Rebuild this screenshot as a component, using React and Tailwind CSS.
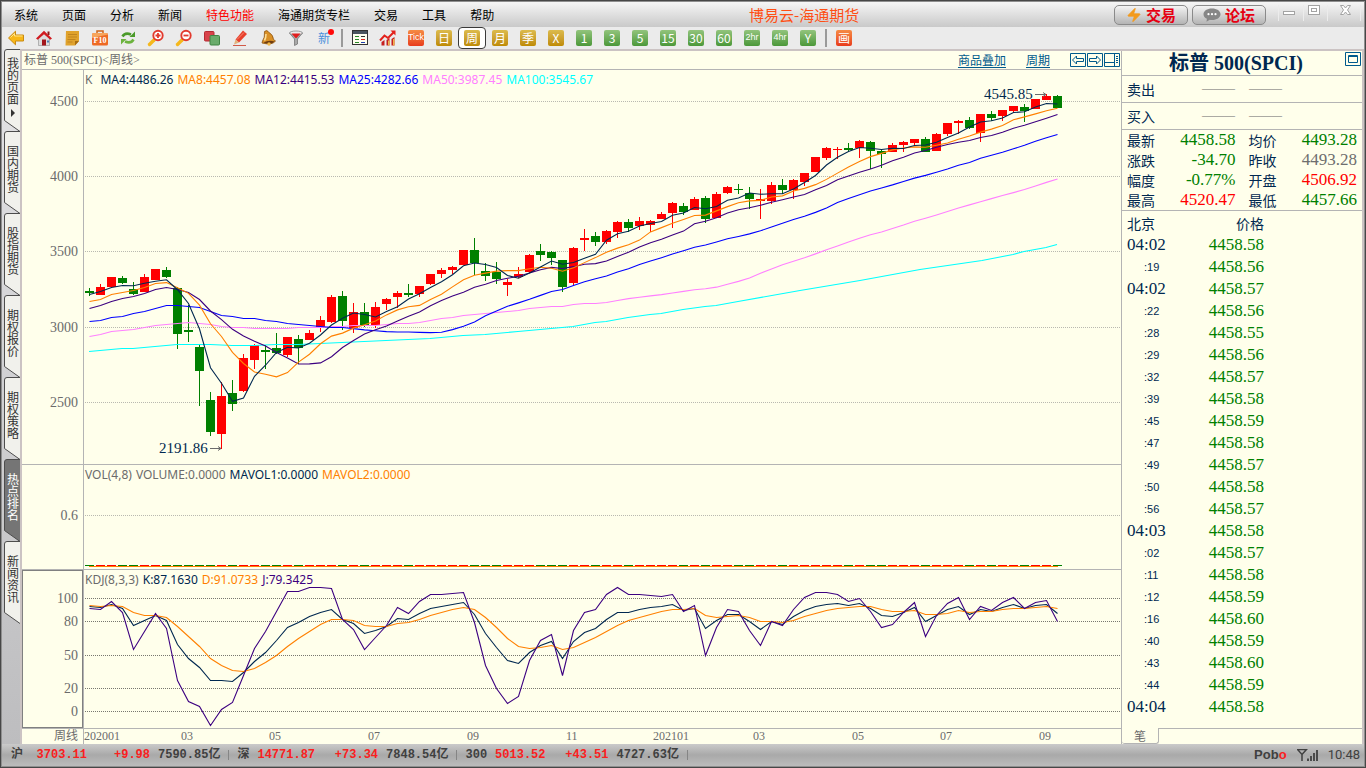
import { Zap } from 'lucide-react';
import clsx from 'clsx';

const MENUS = ['系统', '页面', '分析', '新闻', '特色功能', '海通期货专栏', '交易', '工具', '帮助'];

const SIDE_TABS = ['我的页面', '国内期货', '股指期货', '期权报价', '期权策略', '热点排名', '新闻资讯'];

// one weekly bar: colour, high, body top, body bottom, low (chart y)
const BARS = [
    ['g', 288, 291, 293, 296], ['r', 284, 287, 295, 295], ['r', 277, 277, 287, 287], ['g', 276, 278, 283, 284],
    ['g', 282, 289, 294, 295], ['r', 274, 277, 292, 292], ['r', 269, 269, 280, 280], ['g', 267, 270, 277, 278],
    ['g', 287, 288, 334, 349], ['g', 305, 330, 332, 342], ['g', 345, 347, 371, 406], ['g', 392, 400, 432, 436],
    ['r', 382, 396, 434, 449], ['g', 380, 393, 404, 411], ['r', 354, 358, 391, 392], ['r', 344, 345, 360, 369],
    ['g', 345, 350, 352, 369], ['g', 333, 348, 353, 354], ['r', 337, 337, 355, 357], ['g', 335, 339, 348, 364],
    ['r', 330, 333, 340, 340], ['r', 316, 320, 327, 332], ['r', 295, 297, 322, 323], ['g', 291, 296, 321, 330],
    ['r', 303, 312, 328, 333], ['g', 303, 312, 326, 327], ['r', 302, 307, 325, 328], ['r', 298, 299, 304, 310],
    ['r', 291, 293, 297, 308], ['g', 284, 293, 295, 297], ['r', 286, 286, 294, 297], ['r', 274, 274, 284, 285],
    ['r', 268, 270, 274, 278], ['r', 266, 267, 270, 274], ['r', 250, 250, 265, 265], ['g', 238, 250, 263, 275],
    ['g', 263, 271, 276, 281], ['g', 262, 272, 279, 284], ['r', 279, 282, 285, 296], ['r', 267, 274, 277, 278],
    ['r', 254, 255, 272, 273], ['g', 244, 251, 255, 261], ['g', 251, 252, 258, 265], ['g', 260, 260, 287, 292],
    ['r', 247, 248, 283, 286], ['r', 229, 238, 240, 251], ['g', 232, 236, 242, 246], ['r', 230, 231, 242, 244],
    ['r', 221, 222, 232, 238], ['g', 219, 222, 228, 232], ['r', 217, 221, 226, 230], ['r', 220, 221, 225, 232],
    ['r', 212, 214, 219, 219], ['r', 202, 203, 213, 228], ['g', 203, 206, 212, 215], ['r', 197, 199, 210, 210],
    ['g', 196, 198, 219, 223], ['r', 192, 194, 218, 218], ['r', 186, 187, 193, 194], ['g', 184, 189, 190, 194],
    ['g', 187, 193, 199, 209], ['r', 189, 199, 201, 219], ['r', 182, 185, 201, 204], ['g', 179, 185, 190, 194],
    ['r', 179, 180, 190, 199], ['r', 173, 173, 182, 186], ['r', 157, 157, 172, 172], ['r', 147, 148, 158, 160],
    ['r', 147, 149, 150, 159], ['g', 143, 148, 150, 152], ['r', 140, 141, 148, 158], ['g', 141, 142, 151, 169],
    ['g', 149, 151, 154, 168], ['r', 143, 145, 152, 152], ['r', 141, 142, 145, 152], ['r', 139, 139, 143, 145],
    ['g', 137, 139, 152, 152], ['r', 133, 134, 151, 151], ['r', 123, 123, 134, 136], ['r', 120, 121, 123, 134],
    ['g', 117, 120, 128, 129], ['r', 114, 114, 133, 142], ['g', 111, 114, 118, 121], ['r', 110, 110, 116, 121],
    ['r', 106, 106, 111, 112], ['g', 104, 107, 111, 122], ['r', 99, 99, 109, 109], ['r', 94, 96, 100, 100],
    ['g', 95, 96, 108, 108],
];

const CLOSES = BARS.map(([c, , top, bottom]) => (c === 'r' ? top : bottom));
const barX = (i) => 89 + i * 11;

// moving average; `lead` holds the values from before the window is full
const average = (n, lead) =>
    CLOSES.map((_, i) =>
        i < lead.length ? lead[i] : CLOSES.slice(i - n + 1, i + 1).reduce((a, b) => a + b, 0) / n
    );

const MA4 = average(4, [294, 291, 287]);
const MA8 = average(8, [301, 299, 294, 292, 290, 287, 283]);
const MA12 = average(12, [308, 305, 301, 298, 296, 293, 289, 287, 289, 292, 299]);
const MA25 = average(25, [
    321, 320, 317, 316, 313, 311, 308, 305, 305, 306, 307, 311, 315, 316, 318, 318, 320, 321, 323, 324, 325, 326, 327, 327,
]);
const MA50 = average(50, [
    336, 334, 331, 330, 329, 327, 325, 324, 323, 322, 323, 324, 326, 327, 327, 328, 328, 328, 328, 327, 327, 327, 326, 326,
    325, 325, 325, 324, 323, 323, 322, 320, 318, 317, 315, 314, 313, 312, 311, 310, 308, 307, 306, 306, 304, 303, 303, 302, 300,
]);
const MA100 =
    '89,351.5 122,348.5 133,348.5 166,345.5 177,344.5 210,344.5 232,345.5 254,345.5 276,344.5 298,344.5 320,343.5 342,342.5 364,341.5 408,339.5 430,338.5 463,335.5 485,334.5 518,331.5 551,328.5 573,326.5 595,322.5 606,321.5 628,317.5 650,314.5 661,313.5 683,309.5 705,306.5 716,305.5 738,301.5 800,290.5 860,280.5 920,269.5 982,260.5 1013,254.5 1024,251.5 1046,247.5 1057,244.5';

const K = [
    606, 607, 604, 608, 625, 620, 615, 620, 644, 658, 667, 680, 680, 681, 672, 661, 652, 640, 627, 622, 616, 612, 609, 619,
    623, 633, 630, 626, 618, 619, 613, 608, 606, 604, 602, 614, 633, 647, 660, 663, 652, 645, 641, 658, 641, 632, 628, 619,
    612, 612, 609, 607, 606, 604, 610, 608, 628, 620, 614, 614, 621, 629, 621, 624, 616, 610, 606, 604, 603, 605, 603, 608,
    615, 616, 612, 607, 621, 615, 609, 606, 614, 609, 611, 607, 604, 608, 605, 604, 613,
];
const D = [
    605, 606, 605, 606, 612, 615, 615, 617, 626, 636, 646, 658, 665, 670, 671, 668, 662, 655, 646, 638, 631, 624, 619, 619,
    620, 625, 626, 626, 623, 622, 619, 615, 612, 609, 607, 609, 617, 627, 638, 646, 648, 647, 645, 649, 647, 642, 637, 631,
    625, 620, 617, 614, 611, 609, 609, 608, 615, 617, 616, 615, 617, 621, 621, 622, 620, 616, 613, 610, 608, 607, 606, 606,
    609, 611, 611, 610, 614, 614, 613, 610, 612, 611, 611, 609, 608, 608, 607, 606, 608,
];
const J = [
    608, 609, 601, 612, 649, 631, 613, 628, 680, 701, 706, 725, 709, 702, 675, 648, 631, 611, 591, 591, 587, 587, 588, 619,
    629, 649, 637, 625, 607, 613, 601, 594, 594, 593, 592, 622, 665, 688, 703, 696, 660, 640, 634, 675, 630, 612, 609, 594,
    587, 594, 594, 595, 596, 594, 611, 605, 655, 627, 609, 611, 630, 645, 621, 625, 609, 597, 592, 592, 594, 601, 598, 611,
    627, 624, 612, 602, 636, 615, 603, 597, 619, 606, 610, 602, 597, 608, 602, 600, 621,
];

const MONTHS = [
    [84, '202001'], [181, '03'], [269, '05'], [368, '07'], [467, '09'], [566, '11'],
    [653, '202101'], [753, '03'], [852, '05'], [940, '07'], [1039, '09'],
];

const TICKS = [
    ['04:02', '4458.58'], [':19', '4458.56'], ['04:02', '4458.57'], [':22', '4458.56'], [':28', '4458.55'],
    [':29', '4458.56'], [':32', '4458.57'], [':39', '4458.58'], [':45', '4458.59'], [':47', '4458.58'],
    [':49', '4458.57'], [':50', '4458.58'], [':56', '4458.57'], ['04:03', '4458.58'], [':02', '4458.57'],
    [':11', '4458.58'], [':12', '4458.59'], [':16', '4458.60'], [':40', '4458.59'], [':43', '4458.60'],
    [':44', '4458.59'], ['04:04', '4458.58'],
];

const QUOTES = [
    ['最新', '4458.58', 'text-[#008000]'], ['均价', '4493.28', 'text-[#008000]'],
    ['涨跌', '-34.70', 'text-[#008000]'], ['昨收', '4493.28', 'text-[#6e6e6e]'],
    ['幅度', '-0.77%', 'text-[#008000]'], ['开盘', '4506.92', 'text-[#ff0000]'],
    ['最高', '4520.47', 'text-[#ff0000]'], ['最低', '4457.66', 'text-[#008000]'],
];

const INDEXES = [
    { name: '沪', price: '3703.11', change: '+9.98', volume: '7590.85亿', priceClass: 'w-14' },
    { name: '深', price: '14771.87', change: '+73.34', volume: '7848.54亿', priceClass: '' },
    { name: '300', price: '5013.52', change: '+43.51', volume: '4727.63亿', priceClass: '' },
];

const SERIF = 'font-["Liberation_Serif","Noto_Sans_CJK_SC",serif]';
const LEGEND = 'absolute left-[63px] top-px flex gap-1 whitespace-nowrap font-["Noto_Sans",sans-serif] text-xs leading-[18px]';

/* ---------- toolbar icons ---------- */

function Icon({ children }) {
    return <svg viewBox="0 0 16 16" className="h-4 w-4 overflow-visible">{children}</svg>;
}

function BackIcon() {
    return (
        <Icon>
            <path d="M.5 8 7.5 1.2V5H15.5v6H7.5v3.8Z" fill="#f7b718" stroke="#c98a10" />
            <path d="M2.5 7.5 6.5 3.5V6h8" fill="none" stroke="#ffe48a" />
        </Icon>
    );
}

function HomeIcon() {
    return (
        <Icon>
            <path d="M2.5 8 8 3l5.5 5v7.5h-11Z" fill="#dcdcdc" stroke="#8f8f8f" strokeWidth=".6" />
            <path d="M11.5 1.5h2V5h-2Z" fill="#8c1a1a" />
            <path d="M0 8.5 8 .8l8 7.7-1.7 1.2L8 4.2 1.7 9.7Z" fill="#d01b20" />
            <path d="M6 9.5h4v6H6Z" fill="#a3161c" />
            <path d="M11 10.5h2v2h-2Z" fill="#4c7db3" />
        </Icon>
    );
}

function NoteIcon() {
    return (
        <Icon>
            <path d="M2 1h13v10l-4 4.5H1.5Z" fill="#e0a22c" />
            <path d="M15 11h-4v4.5Z" fill="#a86d10" />
            <path d="M4 4.5h9M4 7h9M3.500 9.500h8M3.500 12h5" stroke="#c08420" />
        </Icon>
    );
}

function F10Icon() {
    return (
        <Icon>
            <path d="M5 3V1h6v2" fill="none" stroke="#d0661a" strokeWidth="1.500" />
            <rect x="0" y="3" width="16" height="12.500" rx="1.500" fill="#ee6a24" />
            <path d="M0 4.500Q0 3 1.500 3h13Q16 3 16 4.500L0 8Z" fill="#f7a55c" />
            <text x="8" y="12.500" textAnchor="middle" fontSize="8" fontWeight="bold" fontFamily="Liberation Serif, serif" fill="#fff">F10</text>
        </Icon>
    );
}

function RefreshIcon() {
    return (
        <Icon>
            <path d="M2.500 6.500Q5 2 11 4.500" fill="none" stroke="#4a9a2a" strokeWidth="2.600" />
            <path d="M9.500 7H15V1.500Z" fill="#4a9a2a" />
            <path d="M13.500 9.500Q11 14 5 11.500" fill="none" stroke="#6cb33e" strokeWidth="2.600" />
            <path d="M6.500 9H1v5.500Z" fill="#6cb33e" />
        </Icon>
    );
}

function LensIcon({ plus }) {
    return (
        <Icon>
            <path d="M1.500 14.500 6 10" stroke="#f5b81c" strokeWidth="3.400" strokeLinecap="round" />
            <circle cx="10" cy="5.500" r="4.700" fill="#fff" stroke="#e23a2e" strokeWidth="1.900" />
            <path d={plus ? 'M7.500 5.500h5M10 3v5' : 'M7.500 5.500h5'} stroke="#e23a2e" strokeWidth="1.800" />
        </Icon>
    );
}

function OverlayIcon() {
    return (
        <Icon>
            <rect x=".5" y="1.500" width="9.500" height="9.500" rx="1" fill="#d8434a" stroke="#b52b32" />
            <rect x="6" y="5.500" width="9.500" height="9.500" rx="1" fill="#69ab6b" stroke="#3f8543" />
        </Icon>
    );
}

function PencilIcon() {
    return (
        <Icon>
            <path d="M3.500 9.500 11 .5 15 4 7 12.500Z" fill="#e8402c" />
            <path d="m3.500 9.500 3.500 3-5 2Z" fill="#e2b27c" />
            <path d="m5 9.500 7-7" stroke="#f58b74" />
            <path d="M1 15.500h13" stroke="#d05a48" />
        </Icon>
    );
}

function BellIcon() {
    return (
        <Icon>
            <path d="M4.500 1.500Q7-.5 8.500 2q5 3 5 7.500l2 1.500Q12 15.500 2 13l.5-2Q5 8 4.500 1.500Z" fill="#d99027" stroke="#8c5310" strokeWidth=".8" />
            <path d="M6 4q0 4-1.500 6.500" fill="none" stroke="#ffe09a" strokeWidth="1.500" />
            <path d="M3.500 12.500Q9 9.500 14.500 11.500 11 15.500 3.500 12.500Z" fill="#6e3c10" />
            <circle cx="9" cy="14" r="1.700" fill="#f0b84a" />
        </Icon>
    );
}

function FilterIcon() {
    return (
        <Icon>
            <path d="M1.500 3 6.500 9v6.500l3-1.500V9l5-6Z" fill="#a8a8a8" stroke="#6b6b6b" strokeWidth=".7" />
            <ellipse cx="8" cy="3" rx="6.500" ry="2" fill="#e9e9e9" stroke="#777" strokeWidth=".7" />
            <path d="M3.500 3.500h9L8.500 8h-1Z" fill="#e21d1d" />
        </Icon>
    );
}

function NewIcon() {
    return (
        <span className="relative text-xs leading-4 text-[#4a90dc]">
            新
            <i className="absolute -right-1 -top-px h-1.5 w-1.5 rounded-full bg-[#ff0a0a]" />
        </span>
    );
}

function TableIcon() {
    return (
        <Icon>
            <rect x=".5" y=".5" width="15" height="14" fill="#fffff0" stroke="#333" />
            <path d="M1 2.500h14" stroke="#4a5560" strokeWidth="3" />
            <path d="M3 6.500h4M3 9.500h4M3 12.500h4" stroke="#2a8a2a" />
            <path d="M9 6.500h4" stroke="#333" />
            <path d="M9 9.500h4" stroke="#e0201c" />
            <path d="M9 12.500h4" stroke="#1f3fb0" />
        </Icon>
    );
}

function BarsIcon() {
    return (
        <Icon>
            <path d="M1.500 12v3.500h3V10ZM6.500 10v5.500h3V8ZM11.500 9v6.500h3V7Z" fill="#c62020" />
            <path d="M8 10.500v5h1.500v-5ZM13 9v6.500h1.500V9Z" fill="#eeb24a" />
            <path d="m0 10.500 4.500-5 3.500 2.500 6-6" fill="none" stroke="#e3221c" strokeWidth="2" />
            <path d="M10.500.5H15.500V5.500Z" fill="#e3221c" />
        </Icon>
    );
}

const TILE_COLORS = {
    gold: 'bg-linear-to-b from-[#dcbb4c] to-[#bf8b00]',
    green: 'bg-linear-to-b from-[#92c47c] to-[#4b9839]',
    red: 'bg-linear-to-b from-[#f58a44] to-[#e83a1c]',
};

function Tile({ color, children }) {
    return (
        <span
            className={clsx(
                'flex h-4 w-4 items-center justify-center whitespace-nowrap rounded-xs text-white',
                TILE_COLORS[color],
                children.length > 2 ? 'font-["Liberation_Sans",sans-serif] text-[9px]' : 'text-xs'
            )}
        >
            {children}
        </span>
    );
}

const TOOLS = [
    ['后退', <BackIcon />], ['主页', <HomeIcon />], ['笔记', <NoteIcon />], ['资料', <F10Icon />], ['刷新', <RefreshIcon />],
    ['放大', <LensIcon plus />], ['缩小', <LensIcon />], ['叠加', <OverlayIcon />], ['画线', <PencilIcon />],
    ['预警', <BellIcon />], ['筛选', <FilterIcon />], ['新功能', <NewIcon />],
];

const PERIODS = [
    ['red', 'Tick'], ['gold', '日'], ['gold', '周'], ['gold', '月'], ['gold', '季'], ['gold', 'X'], ['green', '1'],
    ['green', '3'], ['green', '5'], ['green', '15'], ['green', '30'], ['green', '60'], ['green', '2hr'],
    ['green', '4hr'], ['green', 'Y'],
];

function ToolButton({ label, active, children }) {
    return (
        <button
            type="button"
            aria-label={label}
            className={clsx(
                'flex h-[22px] w-7 items-center justify-center',
                active && 'rounded-sm border border-[#3a3a3a] bg-white'
            )}
        >
            {children}
        </button>
    );
}

function Toolbar() {
    return (
        <div className="flex h-[22px] items-center bg-[#ebebeb]">
            {TOOLS.map(([label, icon]) => (
                <ToolButton key={label} label={label}>{icon}</ToolButton>
            ))}
            <span className="mx-[3px] h-[18px] w-0.5 bg-[#9a9a9a]" />
            <ToolButton label="报价表"><TableIcon /></ToolButton>
            <ToolButton label="走势"><BarsIcon /></ToolButton>
            {PERIODS.map(([color, text]) => (
                <ToolButton key={text} label={text} active={text === '周'}>
                    <Tile color={color}>{text}</Tile>
                </ToolButton>
            ))}
            <span className="mx-[3px] h-[18px] w-0.5 bg-[#9a9a9a]" />
            <ToolButton label="画"><Tile color="red">画</Tile></ToolButton>
        </div>
    );
}

/* ---------- title bar ---------- */

const PILL = 'flex h-5 w-[74px] items-center justify-center gap-1 rounded-[5px] border border-[#8a8a8a] bg-linear-to-b from-[#f4f4f4] to-[#b4b4b4] text-[15px] font-bold leading-4 text-[#e60012]';

function TitleBar() {
    return (
        <header className="flex h-[25px] items-center bg-linear-to-b from-[#f6f6f6] to-[#c9c9c9]">
            <nav className="flex gap-6 whitespace-nowrap pl-3 text-xs text-black">
                {MENUS.map((m) => (
                    <button key={m} type="button" className={clsx(m === '特色功能' && 'text-[#ff0000]')}>{m}</button>
                ))}
            </nav>
            <h1 className="flex-1 whitespace-nowrap text-center text-[15px] leading-5 text-[#ff4f14]">博易云-海通期货</h1>
            <div className="flex items-start gap-1">
                <button type="button" className={PILL}>
                    <Zap className="h-4 w-4 fill-[#f39a1d] text-[#f39a1d]" strokeWidth={1} />
                    交易
                </button>
                <button type="button" className={PILL}>
                    <svg viewBox="0 0 18 14" className="h-3.5 w-[18px]">
                        <path d="M9 .5c4.800 0 8.500 2.400 8.500 5.700S13.800 12 9 12c-.8 0-1.500 0-2.200-.2L3.500 13.800l.4-3C1.800 9.800.5 8.200.5 6.200.5 2.900 4.200.5 9 .5Z" fill="#868686" />
                        <circle cx="5.500" cy="6.200" r="1.100" fill="#fff" />
                        <circle cx="9" cy="6.200" r="1.100" fill="#fff" />
                        <circle cx="12.500" cy="6.200" r="1.100" fill="#fff" />
                    </svg>
                    论坛
                </button>
                <svg viewBox="0 0 94 20" className="h-5 w-[94px] fill-none stroke-[#a3a3a3]">
                    <path d="M8.500 0v16M33.500 0v16M57.500 0v16M90.500 0v16" stroke="#ececec" />
                    <rect x="13.500" y="6.500" width="11" height="3" fill="#fff" />
                    <rect x="38.500" y=".5" width="11" height="9" fill="#fff" />
                    <rect x="41.500" y="3.500" width="5" height="3" />
                    <path d="M70.500.5h3l2 2.500 2-2.500h3L77.500 5l3 4.500h-3l-2-2.500-2 2.500h-3l3-4.500Z" fill="#fff" />
                </svg>
            </div>
        </header>
    );
}

/* ---------- left tabs ---------- */

function SideTabs() {
    return (
        <nav className="w-[18px] shrink-0 bg-linear-to-b from-[#e4e4e6] to-[#bdbdbf] pl-0.5">
            {SIDE_TABS.map((tab, i) => {
                const active = tab === '热点排名';
                return (
                    <button
                        key={tab}
                        type="button"
                        className={clsx(
                            'relative flex h-[82px] w-4 flex-col items-center justify-center pb-1.5 pl-0.5 text-xs leading-3',
                            active ? 'text-white' : 'text-[#333333]'
                        )}
                    >
                        <svg viewBox="0 0 16 82" className="absolute inset-0 h-full w-full overflow-visible">
                            <path
                                d="M16 .5H3Q.5.500.5 3V71.500L16 82.500"
                                fill={active ? '#757575' : '#f1f1ec'}
                                stroke="#4d4d4d"
                            />
                        </svg>
                        <span className="relative w-3 break-all">{tab}</span>
                        {i === 0 && (
                            <svg viewBox="0 0 4 8" className="relative mt-1 h-2 w-1"><path d="M0 0 4 4 0 8Z" fill="#333" /></svg>
                        )}
                    </button>
                );
            })}
        </nav>
    );
}

/* ---------- charts ---------- */

function Line({ values, color }) {
    return (
        <polyline
            fill="none"
            stroke={color}
            strokeWidth="1.100"
            points={values.map((y, i) => `${barX(i) + 0.5},${y + 0.5}`).join(' ')}
        />
    );
}

function GridLines({ rows, color }) {
    return rows.map(([y, label]) => (
        <g key={label}>
            <path d={`M85 ${y}.5H1121`} stroke={color} strokeDasharray="1 1" />
            <text x="78" y={y + 5} textAnchor="end" fontSize="14" fill="#6b6b6b">{label}</text>
        </g>
    ));
}

function Arrow({ x, y }) {
    return <path d={`M${x} ${y}.5h11m-3-2 3 2-3 2`} fill="none" stroke="#6b6b6b" />;
}

function PriceChart() {
    return (
        <section className="relative border-b border-[#b4b4b4]">
            <svg viewBox="22 70 1099 394" className={clsx('block h-auto w-full', SERIF)}>
                <path d="M83.500 70V464" stroke="#b4b4b4" />
                <GridLines color="#b9b9b0" rows={[[101, '4500'], [176, '4000'], [251, '3500'], [327, '3000'], [402, '2500']]} />
                {BARS.map(([c, high, top, bottom, low], i) => (
                    <g key={i} fill={c === 'r' ? '#ff0000' : '#008000'} shapeRendering="crispEdges">
                        <rect x={barX(i)} y={high} width="1" height={low - high} />
                        <rect x={barX(i) - 4} y={top} width="9" height={bottom - top} />
                    </g>
                ))}
                <polyline fill="none" stroke="#00ffff" strokeWidth="1.100" points={MA100} />
                <Line values={MA50} color="#ff80ff" />
                <Line values={MA25} color="#0000ff" />
                <Line values={MA12} color="#3c0080" />
                <Line values={MA8} color="#ff8000" />
                <Line values={MA4} color="#002850" />
                <text x="984" y="99" fontSize="15" fill="#002850">4545.85</text>
                <Arrow x={1035} y={94} />
                <text x="159" y="453" fontSize="15" fill="#002850">2191.86</text>
                <Arrow x={210} y={448} />
            </svg>
            <p className={LEGEND}>
                <span className="mr-1 text-[#6b6b6b]">K</span>
                <span className="text-[#002850]">MA4:4486.26</span>
                <span className="text-[#ff8000]">MA8:4457.08</span>
                <span className="text-[#3c0080]">MA12:4415.53</span>
                <span className="text-[#0000ff]">MA25:4282.66</span>
                <span className="text-[#ff80ff]">MA50:3987.45</span>
                <span className="text-[#00ffff]">MA100:3545.67</span>
            </p>
        </section>
    );
}

function VolumeChart() {
    return (
        <section className="relative border-b border-[#b4b4b4]">
            <svg viewBox="22 465 1099 104" className={clsx('block h-auto w-full', SERIF)}>
                <path d="M83.500 465V569" stroke="#b4b4b4" />
                <GridLines color="#b9b9b0" rows={[[515, '0.6']]} />
                {BARS.map(([c], i) => (
                    <rect key={i} x={barX(i) - 4} y="565" width="9" height="1" fill={c === 'r' ? '#ff0000' : '#008000'} />
                ))}
                <path d="M89 566.500H1058" stroke="#ff8000" />
            </svg>
            <p className={LEGEND}>
                <span className="text-[#6b6b6b]">VOL(4,8)</span>
                <span className="text-[#6b6b6b]">VOLUME:0.0000</span>
                <span className="text-[#002850]">MAVOL1:0.0000</span>
                <span className="text-[#ff8000]">MAVOL2:0.0000</span>
            </p>
        </section>
    );
}

function KdjChart() {
    return (
        <section className="relative border-b border-[#b4b4b4]">
            <svg viewBox="22 570 1099 158" className={clsx('block h-auto w-full', SERIF)}>
                <rect x="22.500" y="570.500" width="60" height="157" fill="none" stroke="#808080" />
                <path d="M83.500 570V728" stroke="#b4b4b4" />
                <GridLines color="#77776f" rows={[[598, '100'], [621, '80'], [655, '50'], [688, '20'], [711, '0']]} />
                <Line values={K} color="#002850" />
                <Line values={D} color="#ff8000" />
                <Line values={J} color="#3c0080" />
            </svg>
            <p className={LEGEND}>
                <span className="text-[#6b6b6b]">KDJ(8,3,3)</span>
                <span className="text-[#002850]">K:87.1630</span>
                <span className="text-[#ff8000]">D:91.0733</span>
                <span className="text-[#3c0080]">J:79.3425</span>
            </p>
        </section>
    );
}

function MonthAxis() {
    return (
        <svg viewBox="22 729 1099 15" className={clsx('block h-auto w-full', SERIF)} fill="#6b6b6b" fontSize="12">
            <path d="M83.500 729V744" stroke="#b4b4b4" />
            <text x="78" y="740" textAnchor="end">周线</text>
            {MONTHS.map(([x, label]) => (
                <text key={x} x={x} y="740">{label}</text>
            ))}
        </svg>
    );
}

function ChartHeader() {
    return (
        <div className="flex h-[19px] items-center border-b border-[#b4b4b4] pl-0.5 pr-px text-xs">
            <h2 className={clsx('flex-1 text-[#6b6b6b]', SERIF)}>标普 500(SPCI)&lt;周线&gt;</h2>
            <a href="#overlay" className="mr-5 text-[#005a8c] underline underline-offset-2">商品叠加</a>
            <a href="#period" className="mr-5 text-[#005a8c] underline underline-offset-2">周期</a>
            <div className="flex gap-px">
                <button type="button" aria-label="左移">
                    <svg viewBox="0 0 16 14" className="block h-3.5 w-4 fill-none stroke-[#005a8c]">
                        <path d="M.5.500h15v13H.5ZM2.500 7l4-4v2.500h7v3h-7V11Z" />
                    </svg>
                </button>
                <button type="button" aria-label="右移">
                    <svg viewBox="0 0 16 14" className="block h-3.5 w-4 fill-none stroke-[#005a8c]">
                        <path d="M.5.500h15v13H.5ZM13.500 7l-4-4v2.500h-7v3h7V11Z" />
                    </svg>
                </button>
                <button type="button" aria-label="布局">
                    <svg viewBox="0 0 16 14" className="block h-3.5 w-4 fill-none stroke-[#005a8c]">
                        <path d="M.5.500h15v13H.5ZM10.500 1v12M1 9.500h9M12 3.500h2M12 5.500h2M12 7.500h2M12 9.500h2" />
                    </svg>
                </button>
            </div>
        </div>
    );
}

/* ---------- quote panel ---------- */

function AskBidRow({ label }) {
    return (
        <div className="flex h-[27px] items-center border-b border-[#b4b4b4] pl-[5px] text-sm">
            <span className="w-[75px]">{label}</span>
            <span className={clsx('flex gap-3.5 text-[11px] text-[#6b6b6b]', SERIF)}>
                <span>———</span>
                <span>———</span>
            </span>
        </div>
    );
}

function QuotePanel() {
    return (
        <aside className="flex w-[241px] shrink-0 flex-col border-l border-[#b4b4b4] text-[#002850]">
            <div className="relative flex h-[25px] items-center justify-center border-b border-[#b4b4b4]">
                <h2 className={clsx('pr-3 text-xl font-bold leading-6', SERIF)}>标普 500(SPCI)</h2>
                <button type="button" aria-label="最大化" className="absolute right-px top-px">
                    <svg viewBox="0 0 16 14" className="block h-3.5 w-4 fill-none stroke-[#005a8c]">
                        <path d="M.5.500h15v13H.5ZM3.500 3.500h9v7h-9ZM3 4.500h10" />
                    </svg>
                </button>
            </div>
            <AskBidRow label="卖出" />
            <AskBidRow label="买入" />
            <dl className="grid grid-cols-[28px_1fr_41px_1fr] border-b border-[#b4b4b4] px-[5px] leading-5">
                {QUOTES.map(([label, value, color], i) => (
                    <div key={label} className="contents">
                        <dt className={clsx('text-sm leading-5', i % 2 && 'pl-[13px]')}>{label}</dt>
                        <dd className={clsx('text-right text-[17px] leading-5', SERIF, color)}>{value}</dd>
                    </div>
                ))}
            </dl>
            <table className="w-full table-fixed border-collapse">
                <thead>
                    <tr className="h-[23px] text-sm leading-5">
                        <th className="w-[86px] p-0 pl-[5px] text-left font-normal">北京</th>
                        <th className="w-[56px] p-0 text-right font-normal">价格</th>
                        <th className="p-0" />
                    </tr>
                </thead>
                <tbody className={SERIF}>
                    {TICKS.map(([time, price], i) => (
                        <tr key={i} className="h-[22px]">
                            <td
                                className={clsx(
                                    'p-0 leading-5',
                                    time.length > 3 ? 'pl-[5px] text-[17px]' : 'pl-[22px] font-["Liberation_Sans",sans-serif] text-[11px]'
                                )}
                            >
                                {time}
                            </td>
                            <td className="p-0 text-right text-[17px] leading-5 text-[#008000]">{price}</td>
                            <td className="p-0" />
                        </tr>
                    ))}
                </tbody>
            </table>
            <div className="mt-auto flex h-4">
                <button type="button" className="w-[37px] rounded-b-[3px] border-b border-r border-[#b4b4b4] text-xs leading-[15px] text-[#6b6b6b]">笔</button>
                <span className="flex-1 border-t border-[#b4b4b4]" />
            </div>
        </aside>
    );
}

/* ---------- status bar ---------- */

function StatusBar() {
    return (
        <footer className="flex h-[22px] items-center whitespace-nowrap bg-linear-to-b from-[#cacaca] via-[#a9a9a9] to-[#bcbcbc] pl-[9px] pr-1 font-['Liberation_Mono','Noto_Sans_CJK_SC',monospace] text-xs font-bold text-[#404040]">
            {INDEXES.map((ix) => (
                <div key={ix.name} className="flex items-center">
                    <span>{ix.name}</span>
                    <span className={clsx('ml-2 text-right text-[#fa2020]', ix.priceClass)}>{ix.price}</span>
                    <span className="w-[63px] text-right text-[#fa2020]">{ix.change}</span>
                    <span className="ml-2">{ix.volume}</span>
                    <i className="mx-2 h-2.5 w-px bg-[#858585]" />
                </div>
            ))}
            <div className="ml-auto flex items-center gap-2.5 font-['Liberation_Sans',sans-serif]">
                <span className="text-[13px]">Pob<span className="text-[#fa2020]">o</span></span>
                <svg viewBox="0 0 21 12" className="h-3 w-[21px] fill-none stroke-[#404040]">
                    <path d="M.5.500h9L5 5.500ZM5 5v7" strokeWidth="1.500" />
                    <path d="M11 9.500V12M14 7v5M17 4v8M20 1v11" strokeWidth="1.800" />
                </svg>
                <span className="font-['Roboto',sans-serif] text-[13px] font-normal">10:48</span>
            </div>
        </footer>
    );
}

export default function App() {
    return (
        <div className="min-h-screen border border-[#474747] bg-[#ffffeb] font-['Noto_Sans_CJK_SC',sans-serif]">
            <div className="border border-[#8f8f8f]">
                <TitleBar />
                <Toolbar />
                <div className="flex">
                    <SideTabs />
                    <main className="flex min-w-0 flex-1 border-x-2 border-t-2 border-[#cbc3c3]">
                        <div className="min-w-0 flex-1">
                            <ChartHeader />
                            <PriceChart />
                            <VolumeChart />
                            <KdjChart />
                            <MonthAxis />
                        </div>
                        <QuotePanel />
                    </main>
                </div>
                <StatusBar />
            </div>
        </div>
    );
}
